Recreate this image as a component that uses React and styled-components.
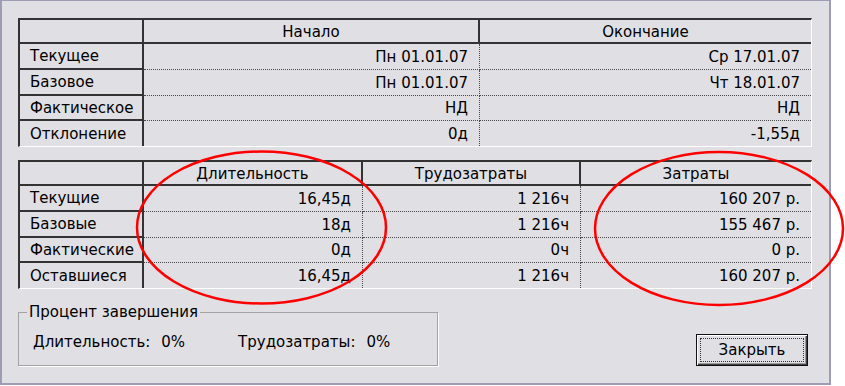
import React from "react";
import styled, { createGlobalStyle, css } from "styled-components";

const GlobalStyle = createGlobalStyle`
  html, body { margin: 0; padding: 0; background: #ffffff; }
  body {
    font-family: "DejaVu Sans", "Noto Sans", sans-serif;
    font-size: 15px;
    color: #000;
  }
`;

const Page = styled.div`
  position: relative;
  width: 845px;
  height: 386px;
`;

const Dialog = styled.div`
  box-sizing: border-box;
  width: 831px;
  height: 385px;
  border: 2px solid #9c9cb4;
  border-top-width: 1px;
  background: #e0dfe3;
  padding: 17px 17px 0 16px;
  display: flex;
  flex-direction: column;
`;

const Table = styled.div`
  display: grid;
  grid-template-columns: ${(p) => p.$cols};
  grid-template-rows: 24px 26px 26px 25px 25px;
  border-top: 2px solid #333;
  border-left: 2px solid #333;
  border-right: 1px solid #fff;
  border-bottom: 1px solid #fff;
  margin-bottom: ${(p) => p.$gap || 0}px;
`;

const dark = "#333";
const dots = "#4a4a4a";

const Cell = styled.div`
  box-sizing: border-box;
  height: 100%;
  display: flex;
  align-items: center;
  padding: 0 11px;
  white-space: nowrap;
  ${(p) =>
    p.$kind === "head" &&
    css`
      justify-content: center;
      padding-top: 1px;
      border-bottom: 2px solid ${dark};
      border-right: ${p.$lastCol ? "none" : `2px solid ${dark}`};
    `}
  ${(p) =>
    p.$kind === "label" &&
    css`
      justify-content: flex-start;
      padding-left: 10px;
      border-right: 2px solid ${dark};
      border-bottom: ${p.$lastRow ? "none" : `2px solid ${dark}`};
    `}
  ${(p) =>
    p.$kind === "value" &&
    css`
      justify-content: flex-end;
      border-right: ${p.$lastCol ? "none" : `1px dotted ${dots}`};
      border-bottom: ${p.$lastRow ? "none" : `1px dotted ${dots}`};
    `}
`;

const Bottom = styled.div`
  display: flex;
  justify-content: space-between;
  align-items: flex-end;
  margin-top: 15px;
  padding-right: 4px;
`;

const GroupBox = styled.fieldset`
  box-sizing: border-box;
  width: 420px;
  height: 62px;
  margin: 0;
  padding: 0 14px 0 14px;
  border: 1px solid #a3a3a3;
  box-shadow: 1px 1px 0 #ffffff;
  display: flex;
  align-items: center;
`;

const Legend = styled.legend`
  padding: 0 2px;
  margin-left: -6px;
  line-height: 17px;
  background: #e0dfe3;
`;

const Stats = styled.div`
  display: flex;
  gap: 53px;
  margin-top: -3px;
`;

const Stat = styled.div`
  display: flex;
  gap: 11px;
`;

const Button = styled.button`
  box-sizing: border-box;
  width: 112px;
  height: 32px;
  padding: 3px;
  font: inherit;
  color: #000;
  background: #e0dfe3;
  border: 1px solid #111;
  box-shadow: inset 1px 1px 0 #ffffff, inset -1px -1px 0 #404040,
    inset -2px -2px 0 #9a9a9a;
  display: flex;
`;

const Focus = styled.span`
  flex: 1;
  border: 1px dotted #333;
  display: flex;
  align-items: center;
  justify-content: center;
`;

const Overlay = styled.svg`
  position: absolute;
  left: 0;
  top: 0;
  width: 845px;
  height: 386px;
  pointer-events: none;
`;

const datesHead = ["", "Начало", "Окончание"];
const datesRows = [
  ["Текущее", "Пн 01.01.07", "Ср 17.01.07"],
  ["Базовое", "Пн 01.01.07", "Чт 18.01.07"],
  ["Фактическое", "НД", "НД"],
  ["Отклонение", "0д", "-1,55д"],
];

const costHead = ["", "Длительность", "Трудозатраты", "Затраты"];
const costRows = [
  ["Текущие", "16,45д", "1 216ч", "160 207 р."],
  ["Базовые", "18д", "1 216ч", "155 467 р."],
  ["Фактические", "0д", "0ч", "0 р."],
  ["Оставшиеся", "16,45д", "1 216ч", "160 207 р."],
];

function StatTable({ cols, head, rows, gap }) {
  return (
    <Table $cols={cols} $gap={gap}>
      {head.map((h, i) => (
        <Cell key={"h" + i} $kind="head" $lastCol={i === head.length - 1}>
          {h}
        </Cell>
      ))}
      {rows.map((r, ri) =>
        r.map((v, ci) => (
          <Cell
            key={ri + "-" + ci}
            $kind={ci === 0 ? "label" : "value"}
            $lastCol={ci === r.length - 1}
            $lastRow={ri === rows.length - 1}
          >
            {v}
          </Cell>
        ))
      )}
    </Table>
  );
}

export default function App() {
  return (
    <Page>
      <GlobalStyle />
      <Dialog>
        <StatTable cols="124px 336px 1fr" head={datesHead} rows={datesRows} gap={13} />
        <StatTable cols="124px 219px 218px 1fr" head={costHead} rows={costRows} />
        <Bottom>
          <GroupBox>
            <Legend>Процент завершения</Legend>
            <Stats>
              <Stat>
                <span>Длительность:</span>
                <span>0%</span>
              </Stat>
              <Stat>
                <span>Трудозатраты:</span>
                <span>0%</span>
              </Stat>
            </Stats>
          </GroupBox>
          <Button>
            <Focus>Закрыть</Focus>
          </Button>
        </Bottom>
      </Dialog>
      <Overlay viewBox="0 0 845 386">
        <ellipse cx="261.5" cy="227.5" rx="124.5" ry="76" fill="none" stroke="#f00" strokeWidth="2.5" />
        <ellipse cx="719" cy="228.5" rx="124" ry="76.5" fill="none" stroke="#f00" strokeWidth="2.5" />
      </Overlay>
    </Page>
  );
}
